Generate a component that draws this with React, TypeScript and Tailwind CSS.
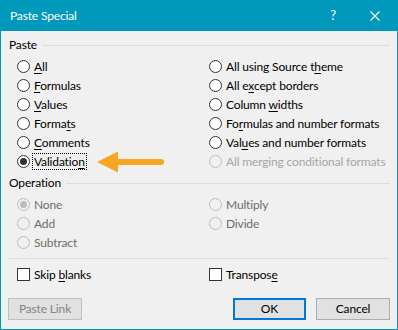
import type { ReactNode } from 'react';

/** 윈도우 10 스타일 라디오 버튼 */
function Radio({ label, checked = false, disabled = false, faint = false }: { label: ReactNode; checked?: boolean; disabled?: boolean; faint?: boolean }) {
  return (
    <div className="flex h-[19px] items-center">
      <span
        className={`flex h-[13px] w-[13px] shrink-0 items-center justify-center rounded-full border ${
          disabled ? 'border-[#bcbcbc] bg-[#f0f0f0]' : 'border-[#333333] bg-white'
        }`}
      >
        {checked && <span className={`h-[7px] w-[7px] rounded-full ${disabled ? 'bg-[#bcbcbc]' : 'bg-[#333333]'}`} />}
      </span>
      <span className={`ml-[4px] whitespace-nowrap ${faint ? 'text-[#a6a6a6]' : disabled ? 'text-[#6d6d6d]' : 'text-black'}`}>{label}</span>
    </div>
  );
}

function Check({ label }: { label: ReactNode }) {
  return (
    <div className="flex h-[19px] items-center">
      <span className="h-[13px] w-[13px] shrink-0 border border-[#333333] bg-white" />
      <span className="ml-[4px] whitespace-nowrap">{label}</span>
    </div>
  );
}

/** 단축키 밑줄 */
const U = ({ children }: { children: ReactNode }) => <span className="underline underline-offset-2">{children}</span>;

function GroupHeader({ title }: { title: string }) {
  return (
    <div className="flex h-[14px] items-center pl-[8px] pr-[7px]">
      <span className="leading-[14px]">{title}</span>
      <div className="ml-[5px] h-px flex-1 bg-[#dcdcdc]" />
    </div>
  );
}

export default function App() {
  return (
    <div
      className="relative flex h-[330px] w-[398px] flex-col overflow-hidden border-x border-b border-[#0099bc] bg-[#f0f0f0] text-[12px] tracking-[-0.15px] text-black"
      style={{ fontFamily: '"Segoe UI", Lato, "Noto Sans", sans-serif' }}
    >
      {/* 타이틀 바 */}
      <div className="-mx-px flex h-[31px] shrink-0 items-center bg-[#0099bc] pl-[10px] text-white">
        <span className="flex-1">Paste Special</span>
        <span className="mr-[34px] text-[13px]">?</span>
        <svg className="mr-[18px]" width="10" height="10" viewBox="0 0 10 10">
          <path d="M0.5 0.5 L9.5 9.5 M9.5 0.5 L0.5 9.5" stroke="white" strokeWidth="1.1" />
        </svg>
      </div>

      {/* Paste */}
      <div className="mt-[7px]">
        <GroupHeader title="Paste" />
      </div>
      <div className="mt-[5px] grid grid-cols-[192px_1fr] pl-[16px]">
        <div className="flex flex-col">
          <Radio label={<><U>A</U>ll</>} />
          <Radio label={<><U>F</U>ormulas</>} />
          <Radio label={<><U>V</U>alues</>} />
          <Radio label={<>Forma<U>t</U>s</>} />
          <Radio label={<><U>C</U>omments</>} />
          <Radio
            checked
            label={
              <span className="-mx-[2px] border border-dotted border-black px-[1px]">
                Validatio<U>n</U>
              </span>
            }
          />
        </div>
        <div className="flex flex-col">
          <Radio label={<>All using Source t<U>h</U>eme</>} />
          <Radio label={<>All e<U>x</U>cept borders</>} />
          <Radio label={<>Column <U>w</U>idths</>} />
          <Radio label={<>Fo<U>r</U>mulas and number formats</>} />
          <Radio label={<>Val<U>u</U>es and number formats</>} />
          <Radio disabled faint label="All merging conditional formats" />
        </div>
      </div>

      {/* Operation */}
      <div className="mt-[5px]">
        <GroupHeader title="Operation" />
      </div>
      <div className="mt-[5px] grid grid-cols-[192px_1fr] pl-[16px]">
        <div className="flex flex-col">
          <Radio disabled checked label="None" />
          <Radio disabled label="Add" />
          <Radio disabled label="Subtract" />
        </div>
        <div className="flex flex-col">
          <Radio disabled label="Multiply" />
          <Radio disabled label="Divide" />
        </div>
      </div>

      <div className="mx-[8px] mt-[6px] h-px bg-[#dcdcdc]" />

      <div className="mt-[6px] grid grid-cols-[192px_1fr] pl-[16px]">
        <Check label={<>Skip <U>b</U>lanks</>} />
        <Check label={<>Transpos<U>e</U></>} />
      </div>

      {/* 버튼 */}
      <div className="mt-[14px] flex items-center px-[7px]">
        <div className="flex h-[22px] w-[74px] items-center justify-center border border-[#bfbfbf] bg-[#e1e1e1] text-[#838383]">Paste Link</div>
        <div className="ml-auto flex h-[22px] w-[73px] items-center justify-center border-2 border-[#0078d7] bg-[#e1e1e1]">OK</div>
        <div className="ml-[10px] flex h-[22px] w-[74px] items-center justify-center border border-[#adadad] bg-[#e1e1e1]">Cancel</div>
      </div>

      {/* 화살표 (주석) */}
      <svg className="absolute left-[96px] top-[151px]" width="68" height="22" viewBox="0 0 68 22">
        <path d="M0 11 L21 0.5 L21 21.5 Z" fill="#f6a623" />
        <path d="M18 11 L64 11" stroke="#f6a623" strokeWidth="6" strokeLinecap="round" />
      </svg>
    </div>
  );
}
